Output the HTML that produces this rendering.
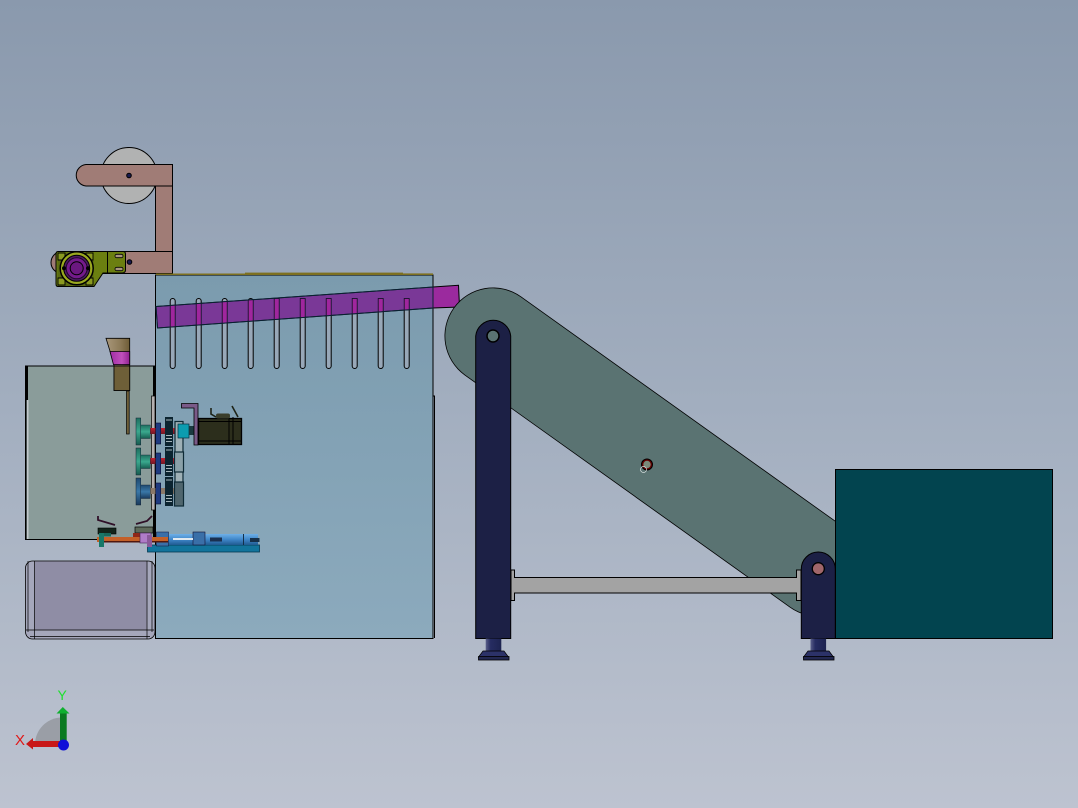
<!DOCTYPE html>
<html><head><meta charset="utf-8"><title>CAD assembly</title>
<style>html,body{margin:0;padding:0;width:1078px;height:808px;overflow:hidden;background:#a0acbd}svg{display:block}</style></head>
<body>
<svg xmlns="http://www.w3.org/2000/svg" width="1078" height="808" viewBox="0 0 1078 808">
<defs>
<linearGradient id="bg" x1="0" y1="0" x2="0" y2="1"><stop offset="0" stop-color="#8a99ad"/><stop offset=".5" stop-color="#a2aebf"/><stop offset="1" stop-color="#bdc3d0"/></linearGradient>
<linearGradient id="panel" x1="0" y1="0" x2="0" y2="1"><stop offset="0" stop-color="#7b9bae"/><stop offset="1" stop-color="#8caabd"/></linearGradient>
<linearGradient id="fun" x1="0" y1="0" x2="1" y2="0"><stop offset="0" stop-color="#a8977a"/><stop offset=".6" stop-color="#8d7a58"/><stop offset="1" stop-color="#6e5c36"/></linearGradient>
<linearGradient id="mag" x1="0" y1="0" x2="1" y2="0"><stop offset="0" stop-color="#a02ca4"/><stop offset=".6" stop-color="#c050bc"/><stop offset="1" stop-color="#902090"/></linearGradient>
<linearGradient id="teal" x1="0" y1="0" x2="0" y2="1"><stop offset="0" stop-color="#1f6f60"/><stop offset=".5" stop-color="#3aa88e"/><stop offset="1" stop-color="#165c50"/></linearGradient>
<linearGradient id="blu" x1="0" y1="0" x2="0" y2="1"><stop offset="0" stop-color="#1f4a70"/><stop offset=".5" stop-color="#3a78a8"/><stop offset="1" stop-color="#1a3a5c"/></linearGradient>
<linearGradient id="screw" x1="0" y1="0" x2="0" y2="1"><stop offset="0" stop-color="#6fb0e8"/><stop offset=".5" stop-color="#3f86c8"/><stop offset="1" stop-color="#205a90"/></linearGradient>
<linearGradient id="foot" x1="0" y1="0" x2="1" y2="0"><stop offset="0" stop-color="#5a5f8a"/><stop offset=".3" stop-color="#262c62"/><stop offset="1" stop-color="#1d2350"/></linearGradient>
<linearGradient id="rod" x1="0" y1="0" x2="0" y2="1"><stop offset="0" stop-color="#c02030"/><stop offset="1" stop-color="#701824"/></linearGradient>
<clipPath id="barclip"><polygon points="156,306.5 433,287 433,308 157.5,328"/></clipPath>
</defs>
<rect width="1078" height="808" fill="url(#bg)"/>

<!-- pulley and arm -->
<circle cx="129" cy="175.5" r="28" fill="#b1b2b2" stroke="#000" stroke-width="1"/>
<rect x="155.5" y="186" width="17" height="66" fill="#a07c76" stroke="#000" stroke-width="1"/>
<path d="M86 164.5H172.5V186H86A10.8 10.8 0 0 1 86 164.5Z" fill="#a07c76" stroke="#000" stroke-width="1"/>
<path d="M62 251.5H172.5V273.5H62A11 11 0 0 1 62 251.5Z" fill="#a07c76" stroke="#000" stroke-width="1"/>
<circle cx="129" cy="175.5" r="2.3" fill="#1a1a50" stroke="#000"/>
<circle cx="129.5" cy="262" r="2.3" fill="#1a1a50" stroke="#000"/>

<!-- bracket -->
<path d="M58 251.5H123Q125.5 251.5 125.5 254V270Q125.5 273 122 273H103L94 286.5H58Q56 286.5 56 284V254Q56 251.5 58 251.5Z" fill="#6b7f10" stroke="#000" stroke-width="1"/>
<line x1="107.5" y1="252" x2="107.5" y2="273" stroke="#000"/>
<rect x="115" y="254.3" width="8" height="3.4" rx="1.7" fill="#a8967e" stroke="#000" stroke-width=".8"/>
<rect x="115" y="267.3" width="8" height="3.4" rx="1.7" fill="#a8967e" stroke="#000" stroke-width=".8"/>
<rect x="57.5" y="252.5" width="36" height="33.5" fill="#5a6a10"/>
<path d="M58 253h7v7h-7zM86 253h7v7h-7zM58 278h7v7h-7zM86 278h7v7h-7z" fill="#8a9a20" stroke="#000" stroke-width=".9"/>
<circle cx="76.7" cy="268.3" r="16.5" fill="#9aa820" stroke="#000" stroke-width="1.5"/>
<circle cx="76.7" cy="268.3" r="13" fill="#4e1a62" stroke="#000" stroke-width="1"/>
<circle cx="76.7" cy="268.3" r="10.5" fill="#741a8c" stroke="#1c0a28" stroke-width="1"/>
<circle cx="76.7" cy="268.3" r="6.5" fill="#6b1880" stroke="#000" stroke-width="1"/>
<circle cx="64" cy="268.3" r="2" fill="#000"/><circle cx="88" cy="268.3" r="2" fill="#000"/>

<!-- main panel -->
<rect x="155.5" y="275" width="277.5" height="363.5" fill="url(#panel)" stroke="#000" stroke-width="1"/>
<polyline points="433,396 434.5,396 434.5,638" fill="none" stroke="#000"/>
<rect x="156" y="273.5" width="89" height="1.5" fill="#7d7020"/>
<rect x="245" y="272.6" width="158" height="2.4" fill="#7d7020"/>
<rect x="403" y="273.4" width="30" height="1.6" fill="#7d7020"/>

<!-- slots -->
<g fill="#98a8b8" stroke="#000" stroke-width="1">
<rect x="170.2" y="298.5" width="5" height="70" rx="2.5"/><rect x="196.2" y="298.5" width="5" height="70" rx="2.5"/>
<rect x="222.2" y="298.5" width="5" height="70" rx="2.5"/><rect x="248.2" y="298.5" width="5" height="70" rx="2.5"/>
<rect x="274.2" y="298.5" width="5" height="70" rx="2.5"/><rect x="300.2" y="298.5" width="5" height="70" rx="2.5"/>
<rect x="326.2" y="298.5" width="5" height="70" rx="2.5"/><rect x="352.2" y="298.5" width="5" height="70" rx="2.5"/>
<rect x="378.2" y="298.5" width="5" height="70" rx="2.5"/><rect x="404.2" y="298.5" width="5" height="70" rx="2.5"/>
</g>
<!-- purple bar -->
<polygon points="156,306.5 433,287 433,308 157.5,328" fill="#7a3897" stroke="#0a2030" stroke-width="1"/>
<polygon points="433,287 458.5,285.3 459.5,307 433,308" fill="#9b2a9e" stroke="#000" stroke-width="1"/>
<g clip-path="url(#barclip)" fill="#a0269e" stroke="#0a1020" stroke-width=".8">
<rect x="170.2" y="298.5" width="5" height="40"/><rect x="196.2" y="298.5" width="5" height="40"/>
<rect x="222.2" y="298.5" width="5" height="40"/><rect x="248.2" y="298.5" width="5" height="40"/>
<rect x="274.2" y="298.5" width="5" height="40"/><rect x="300.2" y="298.5" width="5" height="40"/>
<rect x="326.2" y="298.5" width="5" height="40"/><rect x="352.2" y="298.5" width="5" height="40"/>
<rect x="378.2" y="298.5" width="5" height="40"/><rect x="404.2" y="298.5" width="5" height="40"/>
</g>
<polygon points="156,306.5 433,287 433,308 157.5,328" fill="none" stroke="#0a2030" stroke-width="1"/>

<!-- tank -->
<rect x="25.5" y="366" width="129.5" height="173.5" fill="#8a9c9a" stroke="#000" stroke-width="1"/>
<rect x="25.5" y="366" width="2.5" height="34" fill="#000"/>
<rect x="25.5" y="400" width="1" height="139" fill="#000"/>
<rect x="27" y="400" width="1.5" height="139" fill="#c2c8cc"/>
<rect x="153" y="366" width="2.5" height="30" fill="#000"/>
<rect x="151.5" y="396" width="3.5" height="114" fill="#b5b0b0" stroke="#000" stroke-width=".7"/>
<rect x="153" y="510" width="2.5" height="30" fill="#000"/>
<!-- funnel -->
<polygon points="106,338.3 129.7,338.3 129.7,390.5 114,390.5 114,364" fill="url(#fun)" stroke="#000" stroke-width=".8"/>
<rect x="114" y="366" width="15.7" height="24.5" fill="#6e5f38" stroke="#000" stroke-width=".8"/>
<polygon points="110,351.5 129.7,351.5 129.7,364.7 113.5,364.7" fill="url(#mag)" stroke="#000" stroke-width=".8"/>
<rect x="126.5" y="391" width="2.7" height="43" fill="#6e5f38" stroke="#000" stroke-width=".7"/>

<!-- bin -->
<rect x="25.5" y="561" width="129.5" height="78" rx="7" fill="#a5a7bb" stroke="#000" stroke-width=".8"/>
<rect x="34.5" y="561.5" width="112" height="68.5" fill="#8f8da5"/>
<path d="M34.5 561V639M147 561V639M28 561V632M152 561V632M26 630H154M30 636.5H150" stroke="#000" stroke-width=".7" fill="none"/>

<!-- belt -->
<line x1="493" y1="336" x2="818" y2="568" stroke="#000" stroke-width="97" stroke-linecap="round"/>
<line x1="493" y1="336" x2="818" y2="568" stroke="#5a7372" stroke-width="95.4" stroke-linecap="round"/>
<circle cx="647" cy="464.5" r="5.5" fill="#600" stroke="#000" stroke-width="1"/>
<circle cx="647" cy="464.5" r="3.7" fill="#7a8a7a"/>
<circle cx="643.5" cy="469.5" r="3" fill="none" stroke="#d8e0e0" stroke-width=".7"/>

<!-- box -->
<rect x="835.5" y="469.5" width="217" height="169" fill="#02444f" stroke="#000" stroke-width="1"/>

<!-- connecting bar -->
<path d="M511 570H514.5V577.5H796.5V570H801V600.5H796.5V593H514.5V600.5H511Z" fill="#a3a3a3" stroke="#000" stroke-width="1"/>

<!-- pillars -->
<path d="M475.7 638.5V336A17.6 17.6 0 0 1 510.7 336V638.5Z" fill="#1c2045" stroke="#000" stroke-width="1"/>
<circle cx="493" cy="336" r="6" fill="#5a7372" stroke="#000" stroke-width="1.5"/>
<path d="M801.3 638.5V569A17 17 0 0 1 835.3 569V638.5Z" fill="#1c2045" stroke="#000" stroke-width="1"/>
<circle cx="818.3" cy="568.7" r="6" fill="#a0666a" stroke="#000" stroke-width="1.3"/>
<!-- feet -->
<g>
<rect x="485.7" y="638.5" width="15.6" height="13" fill="url(#foot)"/>
<polygon points="483,651 504,651 508.5,657 478.5,657" fill="#2c3268" stroke="#000" stroke-width=".7"/>
<rect x="478.5" y="656.5" width="30.5" height="3.5" fill="#232850" stroke="#000" stroke-width=".8"/>
<rect x="810.5" y="638.5" width="15.6" height="13" fill="url(#foot)"/>
<polygon points="808,651 829,651 833.5,657 803.5,657" fill="#2c3268" stroke="#000" stroke-width=".7"/>
<rect x="803.5" y="656.5" width="30.5" height="3.5" fill="#232850" stroke="#000" stroke-width=".8"/>
</g>

<!-- gear assembly -->
<g>
<rect x="150" y="428" width="46" height="6" fill="url(#rod)"/>
<rect x="150" y="458" width="26" height="6" fill="url(#rod)"/>
<rect x="150" y="488" width="26" height="6" fill="#8a7868"/>
<rect x="136" y="418" width="4.7" height="27" fill="url(#teal)" stroke="#123" stroke-width=".5"/>
<rect x="140.7" y="425" width="9.5" height="13.5" fill="url(#teal)" stroke="#123" stroke-width=".4"/>
<rect x="136" y="448" width="4.7" height="27" fill="url(#teal)" stroke="#123" stroke-width=".5"/>
<rect x="140.7" y="455" width="9.5" height="13.5" fill="url(#teal)" stroke="#123" stroke-width=".4"/>
<rect x="136" y="478" width="4.7" height="27" fill="url(#blu)" stroke="#123" stroke-width=".5"/>
<rect x="140.7" y="485" width="9.5" height="13.5" fill="url(#blu)" stroke="#123" stroke-width=".4"/>
<rect x="155.7" y="423" width="5" height="21" fill="#1f3a80" stroke="#0a1030" stroke-width=".6"/>
<rect x="155.7" y="453" width="5" height="21" fill="#1f3a80" stroke="#0a1030" stroke-width=".6"/>
<rect x="155.7" y="483" width="5" height="21" fill="#1f3a80" stroke="#0a1030" stroke-width=".6"/>
<rect x="165" y="417" width="8" height="29" fill="#0c2430"/>
<rect x="165" y="447" width="8" height="29" fill="#0c2430"/>
<rect x="165" y="477" width="8" height="29" fill="#0c2430"/>
<path d="M166 435.5h6M166 438.5h6M166 441.5h6M166 465.5h6M166 468.5h6M166 471.5h6M166 495.5h6M166 498.5h6M166 501.5h6M166 420h6M166 450h6M166 480h6" stroke="#d8e4e8" stroke-width=".8"/>
<rect x="175" y="421.5" width="8" height="84" fill="#9eb0b6" stroke="#0e2a36" stroke-width="1.2"/>
<rect x="174.5" y="452" width="9" height="20" fill="#8aa0a8" stroke="#0e2a36" stroke-width="1.2"/>
<rect x="174.5" y="482" width="9" height="24" fill="#50666e" stroke="#0e2a36" stroke-width="1.2"/>
<rect x="178" y="424" width="11" height="14" fill="#0c9cb0" stroke="#063040" stroke-width=".7"/>
<rect x="189" y="426" width="5" height="9" fill="#1a3a40"/>
<!-- purple L bracket -->
<path d="M181.5 403.5H198V445H194V408H181.5Z" fill="#7a5a88" stroke="#000" stroke-width=".8"/>
<!-- motor -->
<rect x="198.5" y="418.5" width="43" height="26" fill="#2c2e1c" stroke="#000" stroke-width="1.3"/>
<path d="M198 421.5H241M198 441H241M229 418V445M233 417V445" stroke="#000" stroke-width="1"/>
<path d="M211 408V414L216 417M232 406L238 417" fill="none" stroke="#1e2418" stroke-width="1.6"/>
<rect x="216" y="413.5" width="14" height="5" rx="2" fill="#3a3e2c"/>
</g>

<!-- bottom screw -->
<g>
<rect x="147.5" y="545" width="112" height="7" fill="#12749c" stroke="#063850" stroke-width=".8"/>
<rect x="168" y="534" width="90" height="11" fill="url(#screw)"/>
<rect x="156.5" y="532" width="12" height="14" fill="#3a6fa8" stroke="#113" stroke-width=".5"/>
<rect x="193" y="532" width="12" height="13" fill="#3a6fa8" stroke="#113" stroke-width=".6"/>
<rect x="173" y="538" width="20" height="2" fill="#dfe8f0"/>
<rect x="210" y="537.5" width="12" height="4" fill="#1a3050"/>
<rect x="243" y="534" width="1" height="11" fill="#14304a"/>
<rect x="250" y="538" width="9.5" height="4" fill="#16304a"/>
<rect x="97" y="537" width="71" height="5" fill="#c46028"/>
<rect x="102" y="541" width="66" height="1.5" fill="#501810"/>
<rect x="98" y="528" width="18" height="6" fill="#12241a" stroke="#000" stroke-width=".6"/>
<rect x="99" y="533" width="5" height="14" fill="#187868"/>
<rect x="104" y="533" width="7" height="3.5" fill="#18685a"/>
<rect x="135" y="527" width="18" height="6" fill="#5e6a5a" stroke="#000" stroke-width=".7"/>
<rect x="133" y="533" width="8" height="4" fill="#902818"/>
<rect x="140" y="533" width="11" height="10" fill="#b07cc8" stroke="#402050" stroke-width=".6"/>
<rect x="147" y="535" width="5" height="12" fill="#8a5a9a"/>
<path d="M98 516V520L115 525M152 516L147 521L136 524" stroke="#301028" stroke-width="1.8" fill="none"/>
</g>

<!-- triad -->
<path d="M35 745A27 27 0 0 1 62 717.5V745Z" fill="#9a9ea6"/>
<rect x="60" y="713" width="6.7" height="29" fill="#0a7a20"/>
<polygon points="62.8,707 69.5,713.5 56.5,713.5" fill="#10b030"/>
<rect x="33" y="741" width="28" height="6" fill="#c81818"/>
<polygon points="26,744 33,738 33,749.5" fill="#c81818"/>
<circle cx="63.5" cy="745" r="5.5" fill="#1010d8"/>
<text x="57.5" y="700" font-family="Liberation Sans, sans-serif" font-size="14" fill="#20e030">Y</text>
<text x="15" y="745" font-family="Liberation Sans, sans-serif" font-size="15" fill="#e01818">X</text>
</svg>
</body></html>
